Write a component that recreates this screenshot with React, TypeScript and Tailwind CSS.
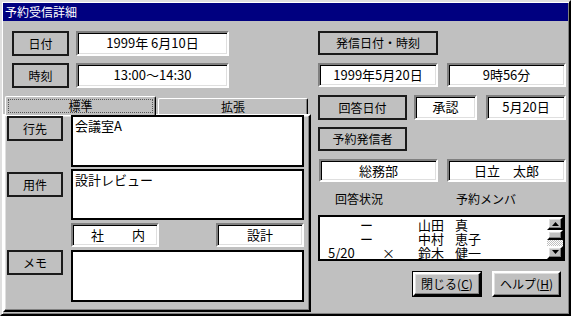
import React from 'react';

const font = { fontFamily: '"Noto Sans CJK JP", "Liberation Sans", sans-serif' };

// 3D border helpers in the classic Windows look
const sunken =
  'bg-white border-2 border-t-[#808080] border-l-[#808080] border-r-white border-b-white shadow-[inset_1px_1px_0_#000,inset_-1px_-1px_0_#dfdfdf]';
const raised =
  'bg-[#c0c0c0] border-2 border-t-white border-l-white border-r-black border-b-black shadow-[inset_-1px_-1px_0_#808080,inset_1px_1px_0_#dfdfdf]';
const frame = 'bg-[#c0c0c0] border-2 border-[#1a1a1a] flex items-center justify-center';
const boxed = 'bg-white border-2 border-black';

const Label: React.FC<{ w: string; h?: string; children: React.ReactNode }> = ({ w, h = 'h-[25px]', children }) => (
  <div className={`${frame} ${w} ${h} shrink-0 text-[12px] leading-none`}>{children}</div>
);

const Field: React.FC<{ w: string; h?: string; children?: React.ReactNode; className?: string }> = ({
  w,
  h = 'h-[25px]',
  children,
  className = '',
}) => (
  <div className={`${sunken} ${w} ${h} shrink-0 flex justify-center pt-[2px] text-[13px] leading-[15px] whitespace-nowrap ${className}`}>
    {children}
  </div>
);

const Triangle: React.FC<{ down?: boolean }> = ({ down }) => (
  <svg width="7" height="4" viewBox="0 0 7 4" className={down ? 'rotate-180' : ''}>
    <path d="M3.5 0 L7 4 L0 4 Z" fill="#000" />
  </svg>
);

export default function App() {
  const members = [
    { date: '', dash: 'ー', mark: '', fam: '山田', given: '真' },
    { date: '', dash: 'ー', mark: '', fam: '中村', given: '恵子' },
    { date: '5/20', dash: '', mark: '×', fam: '鈴木', given: '健一' },
  ];

  return (
    <div style={font} className="w-[571px] h-[316px] bg-[#c0c0c0] text-black select-none">
      <div className="w-full h-full border-2 border-t-[#dfdfdf] border-l-[#dfdfdf] border-r-black border-b-black shadow-[inset_1px_1px_0_#fff,inset_-1px_-1px_0_#808080] p-px">
        {/* title bar */}
        <div className="h-[18px] bg-[#000080] text-white text-[12px] leading-[18px] pl-[2px]">予約受信詳細</div>

        <div className="flex mt-[10px]">
          {/* left column */}
          <div className="w-[307px] flex flex-col">
            <div className="flex gap-[7px] pl-[9px]">
              <Label w="w-[57px]">日付</Label>
              <Field w="w-[153px]">1999年 6月10日</Field>
            </div>
            <div className="flex gap-[7px] pl-[9px] mt-[7px]">
              <Label w="w-[57px]">時刻</Label>
              <Field w="w-[153px]">13:00～14:30</Field>
            </div>

            {/* tabs */}
            <div className="flex items-end h-[18px] mt-[8px]">
              <div className="relative z-10 ml-[2px] w-[151px] h-[19px] -mb-px bg-[#c0c0c0] border-t border-l border-r border-t-white border-l-white border-r-black rounded-t-[2px] shadow-[inset_-1px_0_0_#808080] p-[2px]">
                <div className="h-full border border-dotted border-[#555] flex items-center justify-center text-[12px] leading-none">
                  標準
                </div>
              </div>
              <div className="ml-[2px] w-[150px] h-[16px] bg-[#c0c0c0] border-t border-l border-r border-t-white border-l-white border-r-black rounded-t-[2px] shadow-[inset_-1px_0_0_#808080] flex items-center justify-center text-[12px] leading-none">
                拡張
              </div>
            </div>
            <div className="w-[308px] h-[198px] border-2 border-t-white border-l-white border-r-black border-b-black shadow-[inset_-1px_-1px_0_#808080,inset_1px_1px_0_#dfdfdf] pl-[2px] flex flex-col">
              <div className="flex gap-[8px] items-start">
                <Label w="w-[56px]">行先</Label>
                <div className={`${boxed} w-[233px] h-[52px] -mt-px text-[13px] leading-[15px] px-[2px] pt-[1px]`}>会議室A</div>
              </div>
              <div className="flex gap-[8px] items-start mt-[2px]">
                <div className="mt-[3px]">
                  <Label w="w-[56px]">用件</Label>
                </div>
                <div className={`${boxed} w-[233px] h-[51px] text-[13px] leading-[15px] px-[2px] pt-[1px]`}>設計レビュー</div>
              </div>
              <div className="flex mt-[3px] pl-[64px]">
                <Field w="w-[88px]" h="h-[24px]" className="!justify-start pl-[18px] gap-[28px]">
                  <span>社</span>
                  <span>内</span>
                </Field>
                <Field w="w-[88px]" h="h-[24px]" className="ml-[57px]">
                  設計
                </Field>
              </div>
              <div className="flex gap-[8px] items-start mt-[3px]">
                <Label w="w-[56px]">メモ</Label>
                <div className={`${boxed} w-[233px] h-[52px]`} />
              </div>
            </div>
          </div>

          {/* right column */}
          <div className="w-[249px] ml-[8px] flex flex-col">
            <Label w="w-[120px]" h="h-[24px]">発信日付・時刻</Label>
            <div className="flex gap-[9px] mt-[8px]">
              <Field w="w-[120px]" h="h-[24px]">1999年5月20日</Field>
              <Field w="w-[119px]" h="h-[24px]">9時56分</Field>
            </div>
            <div className="flex mt-[8px]">
              <Label w="w-[89px]">回答日付</Label>
              <Field w="w-[63px]" className="ml-[7px]">承認</Field>
              <Field w="w-[80px]" className="ml-[9px]">5月20日</Field>
            </div>
            <div className="mt-[7px]">
              <Label w="w-[89px]" h="h-[24px]">予約発信者</Label>
            </div>
            <div className="flex gap-[9px] mt-[8px] pl-px">
              <Field w="w-[119px]" h="h-[23px]">総務部</Field>
              <Field w="w-[119px]" h="h-[23px]">
                <span>日立　太郎</span>
              </Field>
            </div>
            <div className="flex items-center h-[31px] mt-px text-[12px] leading-none">
              <span className="pl-[17px] w-[138px]">回答状況</span>
              <span>予約メンバ</span>
            </div>
            <div className={`${boxed} w-[247px] h-[46px] mt-px flex`}>
              <div className="flex-1 text-[13px] leading-[14px] pt-px whitespace-nowrap">
                {members.map((m, i) => (
                  <div key={i} className="flex h-[14px]">
                    <span className="w-[62px] shrink-0 pl-[8px]">
                      {m.date}
                      {m.dash && <span className="pl-[32px]">{m.dash}</span>}
                    </span>
                    <span className="w-[36px] shrink-0">{m.mark}</span>
                    <span className="w-[37px] shrink-0">{m.fam}</span>
                    <span>{m.given}</span>
                  </div>
                ))}
              </div>
              <div className="w-[16px] flex flex-col">
                <div className={`${raised} h-[15px] flex items-center justify-center`}>
                  <Triangle />
                </div>
                <div className={`${raised} h-[10px]`} />
                <div className="h-[7px] bg-[repeating-conic-gradient(#c0c0c0_0_25%,#fff_0_50%)] bg-[length:2px_2px]" />
                <div className={`${raised} h-[15px] flex items-center justify-center`}>
                  <Triangle down />
                </div>
              </div>
            </div>
            <div className="flex mt-[10px] pl-[94px] gap-[10px]">
              <div className="w-[70px] h-[26px] border border-black">
                <div className={`${raised} w-full h-full flex items-center justify-center text-[12px] leading-none`}>
                  閉じる(<span className="underline">C</span>)
                </div>
              </div>
              <div className={`${raised} w-[69px] h-[26px] flex items-center justify-center text-[12px] leading-none`}>
                ヘルプ(<span className="underline">H</span>)
              </div>
            </div>
          </div>
        </div>
      </div>
    </div>
  );
}
